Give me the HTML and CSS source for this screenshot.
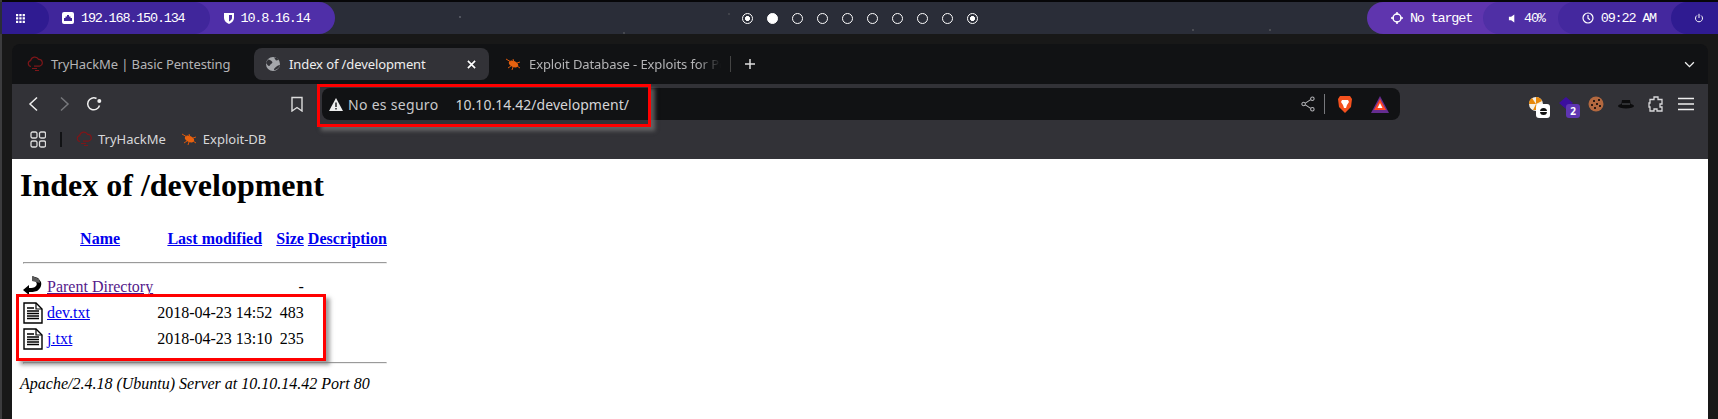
FILE: index.html
```html
<!DOCTYPE html>
<html>
<head>
  <meta charset="utf-8" />
  <title>Index of /development</title>
  <link rel="stylesheet" href="styles.css">
</head>
<body>
  <svg class="defs" width="0" height="0">
    <symbol id="thm" viewBox="0 0 16 16">
      <path d="M4 10.500a3 3 0 0 1 -.4-5.900 4.300 4.300 0 0 1 8-1.200 3.400 3.400 0 0 1 1.400 6.600c-.8.300-1.600.2-2.400.2H7" fill="none" stroke="#7d1619" stroke-width="1.200"/>
      <path d="M5 12.500h5M8 14.500h4" stroke="#7d1619" stroke-width="1"/>
    </symbol>
    <symbol id="bug" viewBox="0 0 16 16">
      <ellipse cx="8.500" cy="8" rx="5" ry="3" fill="#e8620f" transform="rotate(25 8.500 8)"/>
      <path d="M1 3l5 3M3 12l3-2M8 3l1 3M7 14l1-3M15 6l-3 1M15 12l-3-2" stroke="#d9570c" stroke-width="1"/>
    </symbol>
    <symbol id="doc" viewBox="0 0 20 22">
      <path d="M1 1h12l6 6v14H1z" fill="#fff" stroke="#000" stroke-width="1.400"/>
      <path d="M13 1v6h6" fill="none" stroke="#000" stroke-width="1.200"/>
      <path d="M4 6h7M4 9h12M4 11.500h12M4 14h12M4 16.500h12" stroke="#000" stroke-width="1.300"/>
    </symbol>
  </svg>

  <header class="topbar">
    <div class="pills pills-left">
      <div class="pill pill-menu">
        <svg class="icon-s" viewBox="0 0 10 10" fill="#fff"><path d="M0 0h2.500v2.500H0zM3.700 0h2.500v2.500H3.700zM7.400 0h2.500v2.500H7.400zM0 3.700h2.500v2.500H0zM3.700 3.700h2.500v2.500H3.700zM7.400 3.700h2.500v2.500H7.400zM0 7.400h2.500v2.500H0zM3.700 7.400h2.500v2.500H3.700zM7.400 7.400h2.500v2.500H7.400z"/></svg>
      </div>
      <div class="pill pill-lan">
        <svg class="icon-m" viewBox="0 0 12 12"><rect width="12" height="12" rx="2" fill="#fff"/><path d="M2 9V6h1.500V4.500H5V3h2v1.500h1.500V6H10v3z" fill="#40269b"/></svg>
        <span>192.168.150.134</span>
      </div>
      <div class="pill pill-vpn">
        <svg class="icon-m" viewBox="0 0 12 12"><path d="M1 1h10v5c0 3-2.500 4.800-5 6-2.500-1.200-5-3-5-6z" fill="#fff"/><path d="M6 3h3v3c0 1.500-1.500 2.800-3 3.500z" fill="#4f2fa8"/></svg>
        <span>10.8.16.14</span>
      </div>
    </div>

    <div class="workspaces">
      <i class="dot dot-mark"></i>
      <i class="dot dot-on"></i>
      <i class="dot"></i>
      <i class="dot"></i>
      <i class="dot"></i>
      <i class="dot"></i>
      <i class="dot"></i>
      <i class="dot"></i>
      <i class="dot"></i>
      <i class="dot dot-mark"></i>
    </div>

    <div class="pills pills-right">
      <div class="pill pill-target">
        <svg class="icon-m" viewBox="0 0 12 12" fill="none" stroke="#fff" stroke-width="1.500"><circle cx="6" cy="6" r="4"/><path d="M6 0v3M6 9v3M0 6h3M9 6h3"/></svg>
        <span>No target</span>
      </div>
      <div class="pill pill-vol">
        <svg class="icon-s" viewBox="0 0 8 10" fill="#fff"><path d="M0 3h2.500L6 .5v9L2.500 7H0z"/></svg>
        <span>40%</span>
      </div>
      <div class="pill pill-clock">
        <svg class="icon-m" viewBox="0 0 12 12" fill="none" stroke="#fff" stroke-width="1.200"><circle cx="6" cy="6" r="5"/><path d="M6 3v3.300l2 1.400"/></svg>
        <span>09:22 AM</span>
      </div>
      <div class="pill pill-power">
        <svg class="icon-m" viewBox="0 0 12 12" fill="none" stroke="#fff" stroke-width="1.200"><path d="M3.500 3a4.200 4.200 0 1 0 5 0M6 1v5"/></svg>
      </div>
    </div>
  </header>

  <div class="browser">
    <div class="tabstrip">
      <div class="tab">
        <svg class="favicon"><use href="#thm"/></svg>
        <span class="tab-title">TryHackMe | Basic Pentesting</span>
      </div>
      <div class="tab tab-active">
        <svg class="favicon" viewBox="0 0 16 16"><circle cx="8" cy="8" r="7" fill="#a5a7ab"/><path d="M3 3.500c2 0 3 1 4 2s0 2-1 2.500-1 2-2 2-2-2-3-3zM9 14c0-2 1-2 2-3s2-2 4-2c-.5 2.500-3 5-6 5zM9 1.500l3 .5 1.500 2-2.500.5z" fill="#323237"/></svg>
        <span class="tab-title">Index of /development</span>
        <svg class="tab-close" viewBox="0 0 10 10" stroke="#fff" stroke-width="1.800"><path d="M1 1l8 8M9 1L1 9"/></svg>
      </div>
      <div class="tab tab-last">
        <svg class="favicon"><use href="#bug"/></svg>
        <span class="tab-title tab-fade">Exploit Database - Exploits for Pe</span>
      </div>
      <div class="tab-sep"></div>
      <svg class="tab-new" viewBox="0 0 12 12" stroke="#ddd" stroke-width="1.500"><path d="M6 1v10M1 6h10"/></svg>
      <svg class="tab-list" viewBox="0 0 12 8" fill="none" stroke="#eee" stroke-width="1.500"><path d="M1 1.500l5 5 5-5"/></svg>
    </div>

    <div class="navrow">
      <div class="navbtn">
        <svg viewBox="0 0 16 16" fill="none" stroke="#eee" stroke-width="1.500"><path d="M11 1.500L4 8l7 6.500"/></svg>
      </div>
      <div class="navbtn">
        <svg viewBox="0 0 16 16" fill="none" stroke="#77787c" stroke-width="1.500"><path d="M5 1.500L12 8l-7 6.500"/></svg>
      </div>
      <div class="navbtn">
        <svg viewBox="0 0 16 16" fill="none" stroke="#eee" stroke-width="1.500"><path d="M13.500 9.500A6 6 0 1 1 10.500 2.500"/><circle cx="13.300" cy="5" r="2" fill="#eee" stroke="none"/></svg>
      </div>
      <div class="navbtn navbtn-mark">
        <svg viewBox="0 0 16 16" fill="none" stroke="#ddd" stroke-width="1.400"><path d="M3 1.500h10V15l-5-3.500L3 15z"/></svg>
      </div>

      <div class="location">
        <svg class="warn" viewBox="0 0 14 13"><path d="M7 0l7 13H0z" fill="#eee"/><path d="M6.300 4.500h1.400v4.500H6.300zM6.300 10h1.400v1.400H6.300z" fill="#111214"/></svg>
        <span class="secure">No es seguro</span>
        <span class="url">10.10.14.42/development/</span>
        <div class="location-end">
          <svg class="share" viewBox="0 0 16 18" fill="none" stroke="#b5b5b8" stroke-width="1.200"><circle cx="13" cy="3" r="2"/><circle cx="3" cy="9" r="2"/><circle cx="13" cy="15" r="2"/><path d="M5 8l6-4M5 10l6 4"/></svg>
          <div class="location-sep"></div>
          <svg class="brave" viewBox="0 0 16 18"><path d="M3 1h10l2 3-1 8-6 6-6-6-1-8z" fill="#f4511e"/><path d="M5 5h6l1 2-2 3-1 3H7l-1-3-2-3z" fill="#fff"/></svg>
          <svg class="bat" viewBox="0 0 18 17"><path d="M9 0l9 17H0z" fill="#662d91"/><path d="M9 3l6 11H3z" fill="#ff4724"/><path d="M9 7l2.500 5h-5z" fill="#fff"/></svg>
        </div>
      </div>

      <div class="extensions">
        <div class="ext">
          <svg viewBox="0 0 16 16"><circle cx="8" cy="8" r="7" fill="#f5f0e6"/><path d="M8 1a7 7 0 0 1 6 4L8 8zM1 8a7 7 0 0 1 3-6l4 6zM5 14l3-6 3 6z" fill="#e8890c"/></svg>
          <span class="ext-badge ext-badge-light"><i class="minus"></i></span>
        </div>
        <div class="ext">
          <svg viewBox="0 0 16 16"><path d="M8 1l7 6-7 6-7-6z" fill="#3c0f9e"/></svg>
          <span class="ext-badge">2</span>
        </div>
        <div class="ext">
          <svg viewBox="0 0 16 16"><circle cx="8" cy="8" r="7.500" fill="#b3683f"/><path d="M5 4h2v2H5zM10 3h2v2h-2zM3 8h2v2H3zM8 7h2v2H8zM11 9h2v2h-2zM6 11h2v2H6z" fill="#2c1a12"/></svg>
        </div>
        <div class="ext">
          <svg viewBox="0 0 16 16"><path d="M4 4h8l1 6H3z" fill="#0c0c0d"/><ellipse cx="8" cy="10" rx="8" ry="2.500" fill="#0c0c0d"/><path d="M4 8h8" stroke="#55565a"/></svg>
        </div>
        <div class="ext">
          <svg viewBox="0 0 16 16" fill="none" stroke="#d8d8da" stroke-width="1.300"><path d="M6 1h4v2.500h4V8h-2v3h2v4H9v-2H6v2H2v-4H1V7h1V3.500h4z"/></svg>
        </div>
        <div class="ext">
          <svg viewBox="0 0 16 14" stroke="#eee" stroke-width="1.300"><path d="M0 1.500h16M0 7h16M0 12.500h16"/></svg>
        </div>
      </div>
    </div>

    <div class="bookmarks">
      <svg class="apps" viewBox="0 0 16 17" fill="none" stroke="#ddd" stroke-width="1.300"><rect x="1" y="1" width="6" height="6" rx="1.500"/><rect x="9.500" y="1" width="6" height="6" rx="1.500"/><rect x="1" y="10" width="6" height="6" rx="1.500"/><rect x="9.500" y="10" width="6" height="6" rx="1.500"/></svg>
      <div class="bookmark-sep"></div>
      <div class="bookmark">
        <svg class="favicon"><use href="#thm"/></svg>
        <span>TryHackMe</span>
      </div>
      <div class="bookmark">
        <svg class="favicon"><use href="#bug"/></svg>
        <span>Exploit-DB</span>
      </div>
    </div>

    <main class="page">
      <h1>Index of /development</h1>
      <table>
        <tr>
          <th><span class="blank"></span></th>
          <th><a href="#">Name</a></th>
          <th><a href="#">Last modified</a></th>
          <th><a href="#">Size</a></th>
          <th><a href="#">Description</a></th>
        </tr>
        <tr><th colspan="5"><hr></th></tr>
        <tr>
          <td>
            <svg class="file-icon" viewBox="0 0 20 22"><path d="M9 0l6 2 3 4c1 4-1 7-4 9-3 1-6 1-8 1v3L0 14l6-5v3c3 0 5 0 7-2 1-1 1-3 0-4z" fill="#000"/><path d="M9 0l7 3 1 4-8-2z" fill="#5a5a5a"/></svg>
          </td>
          <td><a class="visited" href="#">Parent Directory</a></td>
          <td>&nbsp;</td>
          <td class="right">- </td>
          <td>&nbsp;</td>
        </tr>
        <tr>
          <td><svg class="file-icon"><use href="#doc"/></svg></td>
          <td><a href="#">dev.txt</a></td>
          <td class="right">2018-04-23 14:52</td>
          <td class="right">483</td>
          <td>&nbsp;</td>
        </tr>
        <tr>
          <td><svg class="file-icon"><use href="#doc"/></svg></td>
          <td><a href="#">j.txt</a></td>
          <td class="right">2018-04-23 13:10</td>
          <td class="right">235</td>
          <td>&nbsp;</td>
        </tr>
        <tr><th colspan="5"><hr></th></tr>
      </table>
      <address>Apache/2.4.18 (Ubuntu) Server at 10.10.14.42 Port 80</address>
    </main>
  </div>

  <div class="mark mark-url"></div>
  <div class="mark mark-files"></div>
</body>
</html>
```

FILE: styles.css
```css
html, body {
  height: 100%;
}

body {
  margin: 0;
  padding: 2px 0 0 2px;
  box-sizing: border-box;
  background: #181818;
  overflow: hidden;
  display: flex;
  flex-direction: column;
  font-family: "Noto Sans", sans-serif;
  box-shadow: inset 2px 0 0 #3c3c3e, inset 0 2px 0 #060608;
}

.defs {
  position: absolute;
}

/* top bar */
.topbar {
  display: grid;
  grid-template-columns: 1fr auto 1fr;
  align-items: center;
  height: 32px;
  margin-left: -2px;
  padding-left: 2px;
  flex-shrink: 0;
  color: #fff;
  font-family: "Liberation Mono", monospace;
  font-size: 13.5px;
  letter-spacing: -1.2px;
  background-color: #2a2d38;
  background-image:
    radial-gradient(circle at 460px 15px, #8a8d96 0, transparent 1.2px),
    radial-gradient(circle at 729px 12px, #777 0, transparent 1px),
    radial-gradient(circle at 624px 31px, #888 0, transparent 1px),
    radial-gradient(circle at 1193px 28px, #777 0, transparent 1.2px),
    radial-gradient(circle at 1270px 28px, #777 0, transparent 1.2px);
}

.pills {
  display: flex;
  height: 100%;
}

.pills-right {
  justify-content: flex-end;
}

.pill {
  display: flex;
  align-items: center;
  gap: 7px;
  height: 100%;
  position: relative;
}

.pills-left .pill {
  border-radius: 0 16px 16px 0;
}

.pills-right .pill {
  border-radius: 16px 0 0 16px;
}

.pill-menu {
  background: #2f1b91;
  padding: 0 24px 0 14px;
  z-index: 3;
}

.pill-lan {
  background: #40269b;
  margin-left: -20px;
  padding: 0 25px 0 33px;
  z-index: 2;
}

.pill-vpn {
  background: #4f2fa8;
  margin-left: -20px;
  padding: 0 25px 0 33px;
  gap: 6px;
}

.pill-target {
  background: #5f35ae;
  padding: 0 31px 0 24px;
}

.pill-vol {
  background: #4f2fa5;
  margin-left: -20px;
  padding: 0 33px 0 25px;
}

.pill-clock {
  background: #44289e;
  margin-left: -20px;
  padding: 0 35px 0 24px;
}

.pill-power {
  background: #2f1b91;
  margin-left: -20px;
  padding: 0 14px 0 23px;
  width: 47px;
  box-sizing: border-box;
}

.icon-s {
  width: 9px;
  height: 9px;
}

.icon-m {
  width: 12px;
  height: 12px;
}

.workspaces {
  display: flex;
  gap: 14px;
}

.dot {
  width: 11px;
  height: 11px;
  border: 1.5px solid #fff;
  border-radius: 50%;
  box-sizing: border-box;
}

.dot-on {
  background: #fff;
}

.dot-mark {
  background: radial-gradient(circle, #fff 0 2.2px, transparent 2.7px);
}

/* browser window */
.browser {
  flex: 1;
  display: flex;
  flex-direction: column;
  margin: 10px 10px 0 10px;
  border-radius: 8px 8px 0 0;
  overflow: hidden;
  min-height: 0;
}

.tabstrip {
  display: flex;
  align-items: center;
  gap: 3px;
  height: 40px;
  padding-left: 4px;
  flex-shrink: 0;
  background: #111214;
  color: #b4b4b6;
  font-size: 13px;
  letter-spacing: -0.1px;
}

.tab {
  display: flex;
  align-items: center;
  gap: 8px;
  width: 235px;
  height: 32px;
  padding: 0 11px;
  box-sizing: border-box;
  border-radius: 8px;
  white-space: nowrap;
}

.tab-active {
  background: #323237;
  color: #eee;
}

.tab-last {
  padding: 0 0 0 13px;
}

.tab-title {
  flex: 1;
}

.tab-fade {
  -webkit-mask-image: linear-gradient(to right, #000 85%, transparent 97%);
  mask-image: linear-gradient(to right, #000 85%, transparent 97%);
}

.tab-close {
  width: 9px;
  height: 9px;
  margin-right: 2px;
}

.tab-sep {
  width: 1px;
  height: 16px;
  background: #444;
}

.tab-new {
  width: 12px;
  height: 12px;
  margin-left: 10px;
}

.tab-list {
  width: 11px;
  height: 7px;
  margin-left: auto;
  margin-right: 13px;
}

.favicon {
  width: 16px;
  height: 16px;
  flex-shrink: 0;
}

.navrow {
  display: flex;
  align-items: center;
  height: 40px;
  padding: 0 7px;
  flex-shrink: 0;
  background: #323237;
}

.navbtn {
  display: flex;
  justify-content: center;
  width: 30px;
  flex-shrink: 0;
}

.navbtn svg {
  width: 16px;
  height: 16px;
}

.navbtn-mark {
  margin-left: 173px;
}

.location {
  flex: 1;
  display: flex;
  align-items: center;
  height: 32px;
  margin: 0 121px 0 10px;
  padding: 0 11px 0 7px;
  border-radius: 8px;
  background: #111214;
  color: #c9c9cb;
  font-size: 14px;
  letter-spacing: 0.3px;
}

.warn {
  width: 14px;
  height: 13px;
  margin-right: 5px;
}

.secure {
  margin-right: 17px;
}

.url {
  color: #d5d5d7;
  letter-spacing: 0.05px;
}

.location-end {
  display: flex;
  align-items: center;
  margin-left: auto;
}

.share {
  width: 14px;
  height: 16px;
}

.location-sep {
  width: 1px;
  height: 20px;
  margin: 0 12px 0 9px;
  background: #77787c;
}

.brave {
  width: 16px;
  height: 18px;
  margin-right: 18px;
}

.bat {
  width: 18px;
  height: 17px;
}

.extensions {
  display: flex;
}

.ext {
  position: relative;
  display: flex;
  justify-content: center;
  width: 30px;
}

.ext svg {
  width: 16px;
  height: 16px;
}

.ext-badge {
  position: absolute;
  left: 15px;
  top: 8px;
  width: 14px;
  height: 14px;
  border-radius: 3px;
  background: #5e35b1;
  color: #fff;
  font-size: 10px;
  font-weight: bold;
  line-height: 14px;
  text-align: center;
}

.ext-badge-light {
  background: #fff;
  display: flex;
  align-items: center;
  justify-content: center;
}

.minus {
  width: 7px;
  height: 7px;
  border-radius: 50%;
  background: linear-gradient(#111 40%, #fff 40% 60%, #111 60%);
}

.bookmarks {
  display: flex;
  align-items: center;
  height: 35px;
  padding: 0 0 5px 18px;
  box-sizing: border-box;
  flex-shrink: 0;
  background: #323237;
  color: #d8d8da;
  font-size: 13px;
}

.apps {
  width: 16px;
  height: 17px;
}

.bookmark-sep {
  width: 2px;
  height: 15px;
  margin: 0 14px;
  background: #111214;
}

.bookmark {
  display: flex;
  align-items: center;
  gap: 6px;
  margin-right: 15px;
}

/* apache listing */
.page {
  flex: 1;
  padding: 8px;
  background: #fff;
  color: #000;
  font-family: "Liberation Serif", serif;
  font-size: 16px;
}

.page h1 {
  margin: 0 0 21.44px;
  font-size: 32px;
}

.page a {
  color: #00e;
}

.page a.visited {
  color: #551a8b;
}

.page hr {
  margin: 8px 0;
}

.right {
  text-align: right;
}

.blank,
.file-icon {
  display: block;
  width: 20px;
  height: 22px;
}

.page address {
  font-style: italic;
}

/* red annotation boxes */
.mark {
  position: absolute;
  border: 3px solid #f00;
  box-sizing: border-box;
  box-shadow: 4px 4px 4px rgba(120, 120, 120, 0.7);
}

.mark-url {
  left: 317px;
  top: 84px;
  width: 334px;
  height: 43px;
}

.mark-files {
  left: 16px;
  top: 294px;
  width: 310px;
  height: 67px;
}
```
